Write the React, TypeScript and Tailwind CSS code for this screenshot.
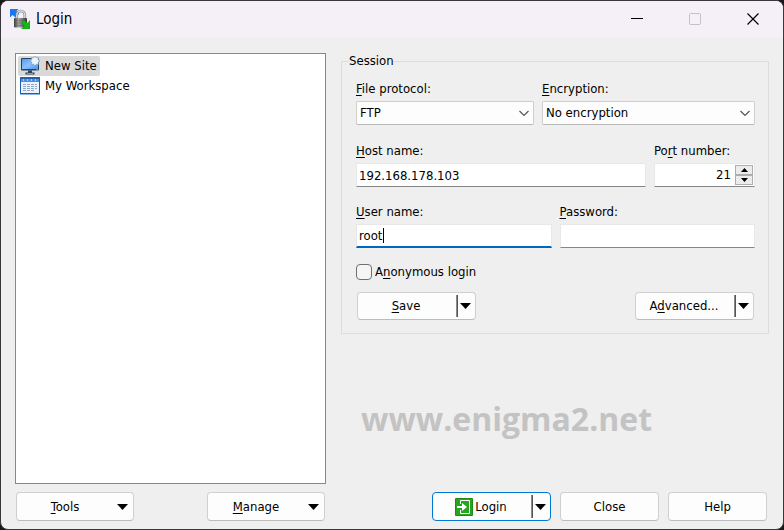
import React from "react";

function Key({ children }: { children: React.ReactNode }) {
  return <span className="underline decoration-1 underline-offset-2">{children}</span>;
}

function AppIcon() {
  return (
    <svg width="20" height="20" viewBox="0 0 20 20" aria-hidden="true">
      <defs>
        <linearGradient id="lockBody" x1="0" x2="1">
          <stop offset="0" stopColor="#3a3a3a" />
          <stop offset=".35" stopColor="#a5a5a5" />
          <stop offset=".7" stopColor="#6a6a6a" />
          <stop offset="1" stopColor="#303030" />
        </linearGradient>
      </defs>
      <path d="M0 0H8.500L6.500 2L9 5L5.500 8.500L2.500 6L0 8.500Z" fill="#1a78ee" />
      <path d="M6.800 10V6A4 4 0 0 1 14.800 6V10" fill="none" stroke="#7c7c7c" strokeWidth="2.600" />
      <path d="M6.800 10V6A4 4 0 0 1 14.800 6V10" fill="none" stroke="#dcdcdc" strokeWidth="1.400" />
      <rect x="4" y="9" width="13" height="9.500" rx="1" fill="url(#lockBody)" />
      <path d="M4.500 11.500H16.500M4.500 14H16.500M4.500 16.500H16.500" stroke="#555" strokeWidth=".4" />
      <path d="M11.800 13.500L14 11.200L17.300 14.200L20 11.500V20H11.500L14.300 17Z" fill="#14b814" stroke="#0a930a" strokeWidth=".4" />
    </svg>
  );
}

function SiteIcon() {
  return (
    <svg width="20" height="20" viewBox="0 0 20 20" aria-hidden="true">
      <defs>
        <linearGradient id="screen" x1="0" y1="0" x2="1" y2="1">
          <stop offset="0" stopColor="#4f9af5" />
          <stop offset=".5" stopColor="#8cc0ff" />
          <stop offset="1" stopColor="#4a94f0" />
        </linearGradient>
      </defs>
      <rect x="1" y="2" width="18" height="12.500" rx="1" fill="#27425e" />
      <rect x="2" y="3" width="16" height="10" fill="url(#screen)" />
      <path d="M8 14.500H12V16.500H14.500V18.500H5.500V16.500H8Z" fill="#27425e" />
      <path d="M7 17.500H13" stroke="#7d9ab5" />
      <circle cx="17" cy="13.700" r=".7" fill="#5f5" />
      <path d="M15 0L16.300 1.800L18.500 1.500L18.200 3.700L20 5L18.200 6.300L18.500 8.500L16.300 8.200L15 10L13.700 8.200L11.500 8.500L11.800 6.300L10 5L11.800 3.700L11.500 1.500L13.700 1.800Z" fill="#eaf5fc" stroke="#7599b5" strokeWidth=".7" />
    </svg>
  );
}

function WorkspaceIcon() {
  return (
    <svg width="20" height="18" viewBox="0 0 20 18" aria-hidden="true">
      <rect x=".5" y=".5" width="19" height="16" fill="#e9f2fd" stroke="#1f5fb5" />
      <rect x="1" y="1" width="18" height="4" fill="#4d8ddd" />
      <path d="M1 1.500H19" stroke="#2460ad" />
      <path d="M3.500 2V4M7.500 2V4M11.500 2V4M15.500 2V4" stroke="#a9ccf5" />
      <path d="M3 7.500H6M7 7.500H10M11 7.500H14M15 7.500H17M3 9.500H6M7 9.500H10M11 9.500H14M15 9.500H17M3 11.500H6M7 11.500H10M11 11.500H14M15 11.500H17M3 13.500H6M7 13.500H10M11 13.500H14" stroke="#8fa9c8" />
      <path d="M0 17.500H20" stroke="#8db4e4" />
    </svg>
  );
}

function LoginIcon() {
  return (
    <svg width="18" height="18" viewBox="0 0 18 18" aria-hidden="true">
      <rect width="18" height="18" rx="1" fill="#1f8a1a" />
      <rect x="1" y="1" width="16" height="16" fill="#27a51f" />
      <path d="M5.500 6V2.500H14.500V15.500H5.500V12" fill="none" stroke="#fff" />
      <path d="M2 8H7V5L12 9L7 13V10H2Z" fill="#fff" />
    </svg>
  );
}

function Triangle() {
  return (
    <svg width="11" height="6" viewBox="0 0 11 6" aria-hidden="true">
      <path d="M0 0H11L5.500 6Z" fill="#000" />
    </svg>
  );
}

const frame = "rounded border border-[#d0d0d0] border-b-[#bcbcbc] bg-[#fdfdfd]";

function SplitButton({ label, menuLabel, primary, height }: { label: React.ReactNode; menuLabel: string; primary?: boolean; height: string }) {
  return (
    <div className={`flex w-[119px] ${height} ${primary ? "rounded border border-[#0078d4] bg-[#fdfdfd]" : frame}`}>
      <button type="button" className="flex flex-1 items-center justify-center gap-0.5 pr-0.5">
        {label}
      </button>
      <span className="my-0.5 w-0.5 border-l border-[#8a8a8a] bg-[#555]" />
      <button type="button" aria-label={menuLabel} className="flex w-[17px] items-center pl-0.5">
        <Triangle />
      </button>
    </div>
  );
}

function MenuButton({ children }: { children: React.ReactNode }) {
  return (
    <button type="button" className={`flex h-[29px] w-[118px] items-center pr-[5px] ${frame}`}>
      <span className="flex-1 pr-1 text-center">{children}</span>
      <Triangle />
    </button>
  );
}

function Dropdown({ id, value }: { id: string; value: string }) {
  return (
    <div className="relative">
      <select id={id} defaultValue={value} className="block h-6 w-full appearance-none rounded-xs border border-[#cfcfcf] border-b-[#b8b8b8] bg-[#fdfdfd] px-[3px]">
        <option>{value}</option>
      </select>
      <svg className="pointer-events-none absolute top-2 right-1" width="12" height="8" viewBox="0 0 12 8" aria-hidden="true">
        <path d="M1.500 2L6 6.500L10.500 2" fill="none" stroke="#555" strokeWidth="1.200" />
      </svg>
    </div>
  );
}

const labelStyle = "block h-6 leading-6";
const inputStyle = "block h-6 w-full border border-[#e8e8e8] border-b-[#868686] bg-white px-0.5 outline-none";

export default function App() {
  return (
    <div className="min-h-screen bg-[#18181a] font-['DejaVu_Sans_Condensed','DejaVu_Sans',sans-serif] text-[13px] leading-4 text-black">
      <div className="flex min-h-screen flex-col overflow-hidden rounded-lg border border-[#3a373c] bg-[#efefef]">
        <header className="flex h-9 items-center bg-[#f5f0f8] pl-[9px]">
          <AppIcon />
          <h1 className="flex-1 pl-[6px] text-[15px]">Login</h1>
          <div className="flex items-center gap-[46px] pr-6">
            <button type="button" aria-label="Minimize">
              <svg width="12" height="12" viewBox="0 0 12 12"><path d="M0 5.500H12" stroke="#000" /></svg>
            </button>
            <button type="button" aria-label="Maximize" disabled>
              <svg width="12" height="12" viewBox="0 0 12 12"><rect x=".5" y=".5" width="11" height="11" rx="1" fill="none" stroke="#c4c0c6" /></svg>
            </button>
            <button type="button" aria-label="Close window">
              <svg width="12" height="12" viewBox="0 0 12 12"><path d="M.5 .5L11.500 11.500M11.500 .5L.5 11.500" stroke="#000" strokeWidth="1.200" /></svg>
            </button>
          </div>
        </header>

        <main className="grid flex-1 grid-cols-[311fr_428fr] gap-x-[15px] px-[14px] pt-4">
          <ul className="border border-[#828790] bg-white p-0.5">
            <li className="flex">
              <button type="button" className="flex h-5 items-center gap-[5px] rounded-xs bg-[#d9d9d9] pr-[3px] pl-0.5">
                <SiteIcon />
                New Site
              </button>
            </li>
            <li className="flex">
              <button type="button" className="flex h-5 items-center gap-[5px] pr-[3px] pl-0.5">
                <WorkspaceIcon />
                My Workspace
              </button>
            </li>
          </ul>

          <div>
            <fieldset className="border border-[#dcdcdc] pt-2 pr-[13px] pb-[13px] pl-[14px]">
              <legend className="-ml-[7px] h-4">Session</legend>
              <div className="grid grid-cols-[178fr_213fr] gap-2">
                <div>
                  <label htmlFor="protocol" className={labelStyle}><Key>F</Key>ile protocol:</label>
                  <Dropdown id="protocol" value="FTP" />
                </div>
                <div>
                  <label htmlFor="encryption" className={labelStyle}><Key>E</Key>ncryption:</label>
                  <Dropdown id="encryption" value="No encryption" />
                </div>
              </div>
              <div className="mt-[14px] grid grid-cols-[290fr_101fr] gap-2">
                <div>
                  <label htmlFor="host" className={labelStyle}><Key>H</Key>ost name:</label>
                  <input id="host" defaultValue="192.168.178.103" className={inputStyle} />
                </div>
                <div>
                  <label htmlFor="port" className={labelStyle}>Po<Key>r</Key>t number:</label>
                  <div className="flex h-6 border border-[#e8e8e8] border-b-[#868686] bg-white pr-px">
                    <input id="port" defaultValue="21" className="w-full min-w-0 flex-1 pr-1 text-right outline-none" />
                    <div className="my-px flex w-[18px] flex-col">
                      <button type="button" aria-label="Increase port" className="flex flex-1 items-center justify-center border border-[#adadad] bg-[#ececec]">
                        <svg width="7" height="4" viewBox="0 0 7 4"><path d="M0 4H7L3.500 0Z" /></svg>
                      </button>
                      <button type="button" aria-label="Decrease port" className="flex flex-1 items-center justify-center border border-[#adadad] bg-[#ececec]">
                        <svg width="7" height="4" viewBox="0 0 7 4"><path d="M0 0H7L3.500 4Z" /></svg>
                      </button>
                    </div>
                  </div>
                </div>
              </div>
              <div className="mt-[13px] grid grid-cols-2 gap-2">
                <div>
                  <label htmlFor="user" className={labelStyle}><Key>U</Key>ser name:</label>
                  <div className="relative">
                    <input id="user" defaultValue="root" className="block h-6 w-full border border-b-2 border-[#e8e8e8] border-b-[#0067c0] bg-white px-0.5 outline-none" />
                    <span className="absolute top-1 left-[27px] h-[15px] w-px bg-black" />
                  </div>
                </div>
                <div>
                  <label htmlFor="password" className={labelStyle}><Key>P</Key>assword:</label>
                  <input id="password" type="password" className={inputStyle} />
                </div>
              </div>
              <label className="mt-4 flex h-4 items-center gap-[3px]">
                <input type="checkbox" className="size-4 appearance-none rounded border border-[#707070] bg-[#f5f5f5]" />
                <span>A<Key>n</Key>onymous login</span>
              </label>
              <div className="mt-3 flex justify-between px-px">
                <SplitButton height="h-7" menuLabel="Save options" label={<span><Key>S</Key>ave</span>} />
                <SplitButton height="h-7" menuLabel="Advanced options" label={<span>A<Key>d</Key>vanced...</span>} />
              </div>
            </fieldset>
            <p className="mt-[65px] pl-5 font-['Open_Sans','Noto_Sans',sans-serif] text-[32px] leading-10 font-bold text-[#c3c3c3]">www.enigma2.net</p>
          </div>
        </main>

        <footer className="grid grid-cols-[311fr_428fr] gap-x-[15px] px-[14px] pt-2 pb-2">
          <div className="flex justify-between px-px">
            <MenuButton><Key>T</Key>ools</MenuButton>
            <MenuButton><Key>M</Key>anage</MenuButton>
          </div>
          <div className="flex justify-end gap-[9px] pr-0.5">
            <SplitButton primary height="h-[29px]" menuLabel="Login options" label={<><LoginIcon /><span>Login</span></>} />
            <button type="button" className={`w-[99px] ${frame}`}>Close</button>
            <button type="button" className={`w-[99px] ${frame}`}>Help</button>
          </div>
        </footer>
      </div>
    </div>
  );
}
